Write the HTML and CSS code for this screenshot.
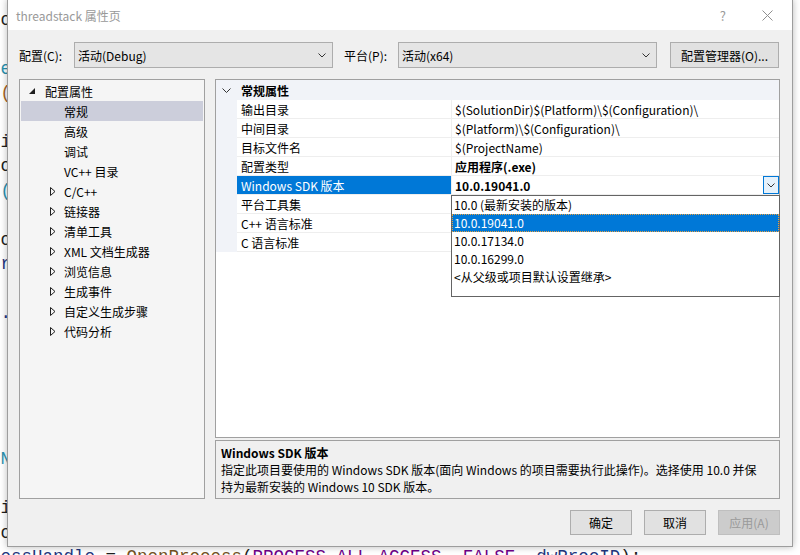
FILE: index.html
```html
<!DOCTYPE html>
<html lang="zh-CN">
<head>
<meta charset="utf-8">
<title>threadstack 属性页</title>
<link rel="stylesheet" href="styles.css">
</head>
<body>
<pre class="editor"><span class="c-dk"> c</span>

<span class="c-tl"> e</span>
<span class="c-br"> (</span>

<span class="c-dk"> i</span>
<span class="c-dk"> c</span>
<span class="c-tl"> (</span>

<span class="c-dk"> c</span>
<span class="c-nv"> r</span>

<span class="c-nv"> .</span>





<span class="c-tl"> N</span>

<span class="c-dk"> i</span>
<span class="c-dk"> c</span>
<span class="c-nv">cessHandle</span><span class="c-dk"> = </span><span class="c-fn">OpenProcess</span><span class="c-dk">(</span><span class="c-pu">PROCESS_ALL_ACCESS</span><span class="c-dk">, </span><span class="c-pu">FALSE</span><span class="c-dk">, </span><span class="c-nv">dwProcID</span><span class="c-dk">);</span></pre>

<div class="dialog">
  <div class="titlebar">
    <span class="title">threadstack 属性页</span>
    <span class="help">?</span>
    <svg class="close" width="11" height="11" viewBox="0 0 11 11"><path d="M0.5 0.5 L10.5 10.5 M10.5 0.5 L0.5 10.5" stroke="#8f8f8f" stroke-width="1" fill="none"/></svg>
  </div>

  <div class="content">
    <div class="toprow">
      <span class="lbl lbl-cfg">配置(C):</span>
      <div class="combo">
        <span>活动(Debug)</span>
        <svg class="chev" width="8" height="5" viewBox="0 0 8 5"><path d="M0.5 0.5 L4 4 L7.5 0.5" stroke="#333" fill="none"/></svg>
      </div>
      <span class="lbl lbl-plat">平台(P):</span>
      <div class="combo">
        <span>活动(x64)</span>
        <svg class="chev" width="8" height="5" viewBox="0 0 8 5"><path d="M0.5 0.5 L4 4 L7.5 0.5" stroke="#333" fill="none"/></svg>
      </div>
      <button class="btn btn-mgr">配置管理器(O)...</button>
    </div>

    <div class="main">
      <div class="tree">
        <div class="trow lvl0">
          <span class="tw"><svg width="6" height="6" viewBox="0 0 6 6"><path d="M6 0 L6 6 L0 6 Z" fill="#1e1e1e"/></svg></span>
          <span>配置属性</span>
        </div>
        <div class="trow lvl1 sel"><span class="tw"></span><span>常规</span></div>
        <div class="trow lvl1"><span class="tw"></span><span>高级</span></div>
        <div class="trow lvl1"><span class="tw"></span><span>调试</span></div>
        <div class="trow lvl1"><span class="tw"></span><span>VC++ 目录</span></div>
        <div class="trow lvl1"><span class="tw"><svg width="6" height="9" viewBox="0 0 6 9"><path d="M0.5 0.5 L5 4.5 L0.5 8.5 Z" stroke="#1e1e1e" fill="none"/></svg></span><span>C/C++</span></div>
        <div class="trow lvl1"><span class="tw"><svg width="6" height="9" viewBox="0 0 6 9"><path d="M0.5 0.5 L5 4.5 L0.5 8.5 Z" stroke="#1e1e1e" fill="none"/></svg></span><span>链接器</span></div>
        <div class="trow lvl1"><span class="tw"><svg width="6" height="9" viewBox="0 0 6 9"><path d="M0.5 0.5 L5 4.5 L0.5 8.5 Z" stroke="#1e1e1e" fill="none"/></svg></span><span>清单工具</span></div>
        <div class="trow lvl1"><span class="tw"><svg width="6" height="9" viewBox="0 0 6 9"><path d="M0.5 0.5 L5 4.5 L0.5 8.5 Z" stroke="#1e1e1e" fill="none"/></svg></span><span>XML 文档生成器</span></div>
        <div class="trow lvl1"><span class="tw"><svg width="6" height="9" viewBox="0 0 6 9"><path d="M0.5 0.5 L5 4.5 L0.5 8.5 Z" stroke="#1e1e1e" fill="none"/></svg></span><span>浏览信息</span></div>
        <div class="trow lvl1"><span class="tw"><svg width="6" height="9" viewBox="0 0 6 9"><path d="M0.5 0.5 L5 4.5 L0.5 8.5 Z" stroke="#1e1e1e" fill="none"/></svg></span><span>生成事件</span></div>
        <div class="trow lvl1"><span class="tw"><svg width="6" height="9" viewBox="0 0 6 9"><path d="M0.5 0.5 L5 4.5 L0.5 8.5 Z" stroke="#1e1e1e" fill="none"/></svg></span><span>自定义生成步骤</span></div>
        <div class="trow lvl1"><span class="tw"><svg width="6" height="9" viewBox="0 0 6 9"><path d="M0.5 0.5 L5 4.5 L0.5 8.5 Z" stroke="#1e1e1e" fill="none"/></svg></span><span>代码分析</span></div>
      </div>

      <div class="right">
        <div class="grid">
          <div class="ghead">
            <span class="gm"><svg width="9" height="5" viewBox="0 0 9 5"><path d="M0.5 0.5 L4.5 4.5 L8.5 0.5" stroke="#333" fill="none"/></svg></span>
            <span class="gtitle">常规属性</span>
          </div>
          <div class="grow"><span class="gm"></span><span class="gn">输出目录</span><span class="gv">$(SolutionDir)$(Platform)\$(Configuration)\</span></div>
          <div class="grow"><span class="gm"></span><span class="gn">中间目录</span><span class="gv">$(Platform)\$(Configuration)\</span></div>
          <div class="grow"><span class="gm"></span><span class="gn">目标文件名</span><span class="gv">$(ProjectName)</span></div>
          <div class="grow"><span class="gm"></span><span class="gn">配置类型</span><span class="gv bold">应用程序(.exe)</span></div>
          <div class="grow gsel"><span class="gm"></span><span class="gn">Windows SDK 版本</span><span class="gv bold"><span>10.0.19041.0</span><span class="ddbtn"><svg width="8" height="5" viewBox="0 0 8 5"><path d="M0.5 0.5 L4 4 L7.5 0.5" stroke="#333" fill="none"/></svg></span></span></div>
          <div class="grow"><span class="gm"></span><span class="gn">平台工具集</span><span class="gv"></span></div>
          <div class="grow"><span class="gm"></span><span class="gn">C++ 语言标准</span><span class="gv"></span></div>
          <div class="grow"><span class="gm"></span><span class="gn">C 语言标准</span><span class="gv"></span></div>

          <div class="dropdown">
            <div class="ditem">10.0 (最新安装的版本)</div>
            <div class="ditem dsel">10.0.19041.0</div>
            <div class="ditem">10.0.17134.0</div>
            <div class="ditem">10.0.16299.0</div>
            <div class="ditem">&lt;从父级或项目默认设置继承&gt;</div>
          </div>
        </div>
        <div class="desc">
          <div class="bold">Windows SDK 版本</div>
          <div class="line">指定此项目要使用的 Windows SDK 版本(面向 Windows 的项目需要执行此操作)。选择使用 10.0 并保</div>
          <div class="line">持为最新安装的 Windows 10 SDK 版本。</div>
        </div>
      </div>
    </div>

    <div class="buttons">
      <button class="btn">确定</button>
      <button class="btn">取消</button>
      <button class="btn disabled">应用(A)</button>
    </div>
  </div>
</div>
</body>
</html>
```
FILE: styles.css
```css
html, body {
  margin: 0;
  padding: 0;
}
body {
  width: 800px;
  height: 555px;
  overflow: hidden;
  position: relative;
  background: #ffffff;
  font-family: "Noto Sans CJK SC", sans-serif;
}

/* code editor behind the dialog */
.editor {
  position: absolute;
  left: -10px;
  top: 8px;
  height: 547px;
  overflow: hidden;
  margin: 0;
  font-family: "Liberation Mono", monospace;
  font-size: 17.5px;
  line-height: 24.4px;
  white-space: pre;
}
.c-dk { color: #1e1e1e; }
.c-tl { color: #2b91af; }
.c-br { color: #a5641e; }
.c-nv { color: #1f377f; }
.c-fn { color: #74531f; }
.c-pu { color: #6f008a; }

/* dialog window */
.dialog {
  position: absolute;
  left: 7px;
  top: -1px;
  width: 784px;
  height: 546px;
  border: 1px solid #9d9d9d;
  background: #f0f0f0;
  box-shadow: 0 0 7px rgba(0, 0, 0, 0.28);
  display: flex;
  flex-direction: column;
  font-family: "Noto Sans CJK SC", sans-serif;
  font-size: 12px;
  color: #000;
}

.titlebar {
  height: 30px;
  flex: none;
  background: #ffffff;
  display: flex;
  align-items: center;
  padding: 0 19px 0 8px;
}
.title {
  flex: 1;
  color: #999999;
}
.help {
  color: #9a9a9a;
  font-size: 13px;
}
.close {
  margin-left: 36px;
}

.content {
  flex: 1;
  display: flex;
  flex-direction: column;
  padding: 12px 12px 11px 11px;
}

.toprow {
  display: flex;
  align-items: center;
  height: 26px;
}
.lbl-cfg { width: 55px; }
.lbl-plat { width: 54px; margin-left: 11px; }
.combo {
  box-sizing: border-box;
  width: 259px;
  height: 26px;
  border: 1px solid #adadad;
  background: #e5e5e5;
  display: flex;
  align-items: center;
  justify-content: space-between;
  padding: 0 6px 0 3px;
}
.btn {
  box-sizing: border-box;
  border: 1px solid #adadad;
  background: #e1e1e1;
  font-family: inherit;
  font-size: 12px;
  color: #000;
  padding: 0;
}
.btn-mgr {
  margin-left: 13px;
  width: 109px;
  height: 26px;
}

.main {
  display: flex;
  gap: 10px;
  margin-top: 11px;
  height: 420px;
}

/* tree */
.tree {
  box-sizing: border-box;
  width: 186px;
  border: 1px solid #a0a0a0;
  background: #f5f5f5;
  padding: 1px;
}
.trow {
  height: 20px;
  display: flex;
  align-items: center;
}
.trow .tw {
  display: flex;
  align-items: center;
}
.lvl0 { padding-left: 8px; }
.lvl0 .tw { width: 16px; }
.lvl1 { padding-left: 29px; }
.lvl1 .tw { width: 14px; }
.trow.sel { background: #cccedb; }

/* property grid */
.right {
  flex: 1;
  display: flex;
  flex-direction: column;
}
.grid {
  position: relative;
  box-sizing: border-box;
  height: 359px;
  border: 1px solid #a0a0a0;
  background: #ffffff;
}
.ghead {
  height: 20px;
  display: flex;
  align-items: center;
  background: #f1f3f8;
}
.gm {
  width: 21px;
  flex: none;
  align-self: stretch;
  background: #f1f3f8;
  display: flex;
  align-items: center;
  padding-left: 6px;
  box-sizing: border-box;
}
.gtitle {
  font-weight: bold;
  padding-left: 4px;
}
.grow {
  display: grid;
  grid-template-columns: 21px 214px 1fr;
  height: 19px;
}
.gn, .gv {
  border-bottom: 1px solid #eeeeee;
  display: flex;
  align-items: center;
  white-space: nowrap;
}
.gn { padding-left: 4px; }
.gv {
  border-left: 1px solid #eeeeee;
  padding-left: 3px;
}
.gsel .gn {
  background: #0078d7;
  color: #ffffff;
}
.gsel .gv {
  justify-content: space-between;
}
.ddbtn {
  box-sizing: border-box;
  width: 16px;
  height: 18px;
  align-self: flex-start;
  border: 1px solid #0078d7;
  background: #e5f1fb;
  display: flex;
  align-items: center;
  justify-content: center;
}
.bold { font-weight: bold; }

.dropdown {
  position: absolute;
  left: 235px;
  top: 115px;
  width: 329px;
  height: 102px;
  box-sizing: border-box;
  border: 1px solid #646464;
  background: #ffffff;
}
.ditem {
  height: 18px;
  line-height: 18px;
  padding-left: 2px;
  white-space: nowrap;
}
.ditem.dsel {
  background: #0078d7;
  color: #ffffff;
  outline: 1px dotted #e8a040;
  outline-offset: -1px;
}

/* description */
.desc {
  box-sizing: border-box;
  height: 59px;
  margin-top: 2px;
  border: 1px solid #a0a0a0;
  background: #f0f0f0;
  padding: 3px 5px;
  line-height: 17px;
}
.desc .line { white-space: nowrap; }

/* bottom buttons */
.buttons {
  display: flex;
  justify-content: flex-end;
  gap: 12px;
  margin-top: 11px;
}
.buttons .btn {
  width: 62px;
  height: 25px;
}
.btn.disabled {
  background: #cccccc;
  border-color: #bfbfbf;
  color: #9a9a9a;
}
```
